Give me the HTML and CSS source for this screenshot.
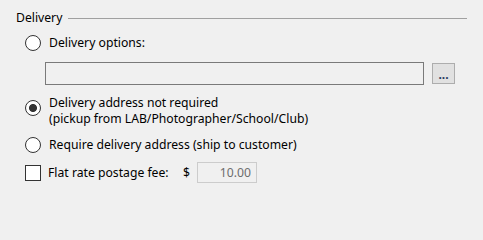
FILE: index.html
```html
<!DOCTYPE html>
<html lang="en">
<head>
<meta charset="utf-8">
<title>Delivery</title>
<link rel="stylesheet" href="styles.css">
</head>
<body>
<div class="panel">
  <div class="group-header">
    <span class="group-title">Delivery</span>
    <span class="group-line"></span>
  </div>
  <div class="options">
    <label class="opt row1">
      <input type="radio" name="delivery" class="radio">
      <span class="opt-text">Delivery options:</span>
    </label>
    <div class="edit-row">
      <input type="text" class="edit" disabled>
      <button class="browse" type="button">...</button>
    </div>
    <label class="opt opt-multi row2">
      <input type="radio" name="delivery" class="radio" checked>
      <span class="opt-text">Delivery address not required<br>(pickup from LAB/Photographer/School/Club)</span>
    </label>
    <label class="opt row3">
      <input type="radio" name="delivery" class="radio">
      <span class="opt-text">Require delivery address (ship to customer)</span>
    </label>
    <div class="fee-row">
      <label class="fee-label">
        <input type="checkbox" class="check">
        <span class="opt-text">Flat rate postage fee:</span>
      </label>
      <span class="currency">$</span>
      <input type="text" class="fee" value="10.00" disabled>
    </div>
  </div>
</div>
</body>
</html>
```

FILE: styles.css
```css
html, body {
  margin: 0;
  padding: 0;
  background: #f0f0f0;
}
body {
  font-family: "Noto Sans", "DejaVu Sans", sans-serif;
  font-size: 12.2px;
  color: #000;
}
.panel {
  padding: 10px 16px 0 16px;
}
.group-header {
  display: flex;
  align-items: center;
  height: 15px;
  line-height: 15px;
}
.group-title {
  padding-right: 6px;
}
.group-line {
  flex: 1;
  height: 1px;
  background: #a0a0a0;
  margin-top: 1px;
}
.options {
  padding-left: 9px;
}
.opt {
  display: flex;
  align-items: center;
  gap: 8px;
  line-height: 16px;
}
.opt-multi {
  align-items: flex-start;
  line-height: 16px;
}
.opt-multi .radio {
  margin-top: 5px;
}
.row1 { margin-top: 10px; }
.row2 { margin-top: 10px; }
.row3 { margin-top: 10px; }
.radio {
  appearance: none;
  -webkit-appearance: none;
  margin: 0;
  width: 16px;
  height: 16px;
  flex: none;
  border: 1px solid #333;
  border-radius: 50%;
  background: #fff;
  box-sizing: border-box;
}
.radio:checked {
  background: radial-gradient(circle, #333 0 3.6px, #fff 4.4px);
}
.check {
  appearance: none;
  -webkit-appearance: none;
  margin: 0;
  width: 16px;
  height: 16px;
  flex: none;
  border: 1px solid #333;
  background: #fff;
  box-sizing: border-box;
}
.edit-row {
  display: flex;
  align-items: center;
  gap: 8px;
  margin-top: 11px;
  padding-left: 20px;
  height: 23px;
}
.edit {
  width: 379px;
  height: 23px;
  box-sizing: border-box;
  margin: 0;
  border: 1px solid #7a7a7a;
  background: #f0f0f0;
}
.browse {
  width: 23px;
  height: 21px;
  box-sizing: border-box;
  margin: 0;
  padding: 0 0 3px 0;
  border: 1px solid #adadad;
  background: #e1e1e1;
  font-family: inherit;
  font-size: 12px;
  font-weight: bold;
  color: #2a3a60;
  line-height: 21px;
  letter-spacing: 0;
}
.fee-row {
  display: flex;
  align-items: center;
  margin-top: 9px;
  height: 21px;
}
.fee-label {
  display: flex;
  align-items: center;
  gap: 7px;
  width: 158px;
}
.currency {
  width: 14px;
}
.fee {
  width: 60px;
  height: 21px;
  box-sizing: border-box;
  margin: 0;
  border: 1px solid #cccccc;
  background: #f0f0f0;
  color: #6d6d6d;
  text-align: right;
  font-family: inherit;
  font-size: 12.2px;
  padding: 0 5px 0 0;
}
```
